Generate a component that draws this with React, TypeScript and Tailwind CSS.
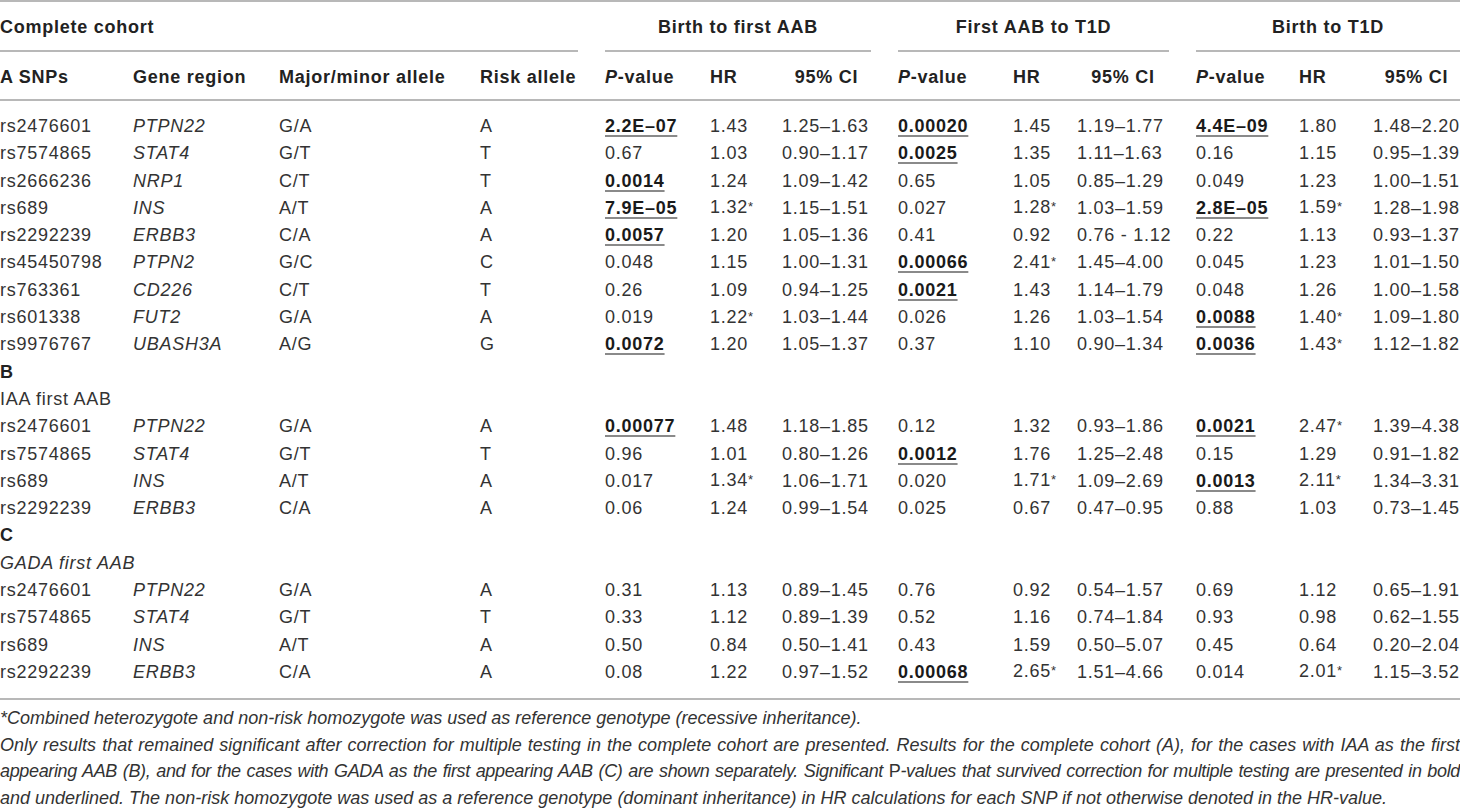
import React from "react";

type Cell = string;
type Row = {
  snp: string;
  gene: string;
  allele: string;
  risk: string;
  vals: Cell[];
};

const A: Row[] = [
  { snp: "rs2476601", gene: "PTPN22", allele: "G/A", risk: "A", vals: ["!2.2E–07", "1.43", "1.25–1.63", "!0.00020", "1.45", "1.19–1.77", "!4.4E–09", "1.80", "1.48–2.20"] },
  { snp: "rs7574865", gene: "STAT4", allele: "G/T", risk: "T", vals: ["0.67", "1.03", "0.90–1.17", "!0.0025", "1.35", "1.11–1.63", "0.16", "1.15", "0.95–1.39"] },
  { snp: "rs2666236", gene: "NRP1", allele: "C/T", risk: "T", vals: ["!0.0014", "1.24", "1.09–1.42", "0.65", "1.05", "0.85–1.29", "0.049", "1.23", "1.00–1.51"] },
  { snp: "rs689", gene: "INS", allele: "A/T", risk: "A", vals: ["!7.9E–05", "1.32*", "1.15–1.51", "0.027", "1.28*", "1.03–1.59", "!2.8E–05", "1.59*", "1.28–1.98"] },
  { snp: "rs2292239", gene: "ERBB3", allele: "C/A", risk: "A", vals: ["!0.0057", "1.20", "1.05–1.36", "0.41", "0.92", "0.76 - 1.12", "0.22", "1.13", "0.93–1.37"] },
  { snp: "rs45450798", gene: "PTPN2", allele: "G/C", risk: "C", vals: ["0.048", "1.15", "1.00–1.31", "!0.00066", "2.41*", "1.45–4.00", "0.045", "1.23", "1.01–1.50"] },
  { snp: "rs763361", gene: "CD226", allele: "C/T", risk: "T", vals: ["0.26", "1.09", "0.94–1.25", "!0.0021", "1.43", "1.14–1.79", "0.048", "1.26", "1.00–1.58"] },
  { snp: "rs601338", gene: "FUT2", allele: "G/A", risk: "A", vals: ["0.019", "1.22*", "1.03–1.44", "0.026", "1.26", "1.03–1.54", "!0.0088", "1.40*", "1.09–1.80"] },
  { snp: "rs9976767", gene: "UBASH3A", allele: "A/G", risk: "G", vals: ["!0.0072", "1.20", "1.05–1.37", "0.37", "1.10", "0.90–1.34", "!0.0036", "1.43*", "1.12–1.82"] },
];

const B: Row[] = [
  { snp: "rs2476601", gene: "PTPN22", allele: "G/A", risk: "A", vals: ["!0.00077", "1.48", "1.18–1.85", "0.12", "1.32", "0.93–1.86", "!0.0021", "2.47*", "1.39–4.38"] },
  { snp: "rs7574865", gene: "STAT4", allele: "G/T", risk: "T", vals: ["0.96", "1.01", "0.80–1.26", "!0.0012", "1.76", "1.25–2.48", "0.15", "1.29", "0.91–1.82"] },
  { snp: "rs689", gene: "INS", allele: "A/T", risk: "A", vals: ["0.017", "1.34*", "1.06–1.71", "0.020", "1.71*", "1.09–2.69", "!0.0013", "2.11*", "1.34–3.31"] },
  { snp: "rs2292239", gene: "ERBB3", allele: "C/A", risk: "A", vals: ["0.06", "1.24", "0.99–1.54", "0.025", "0.67", "0.47–0.95", "0.88", "1.03", "0.73–1.45"] },
];

const C: Row[] = [
  { snp: "rs2476601", gene: "PTPN22", allele: "G/A", risk: "A", vals: ["0.31", "1.13", "0.89–1.45", "0.76", "0.92", "0.54–1.57", "0.69", "1.12", "0.65–1.91"] },
  { snp: "rs7574865", gene: "STAT4", allele: "G/T", risk: "T", vals: ["0.33", "1.12", "0.89–1.39", "0.52", "1.16", "0.74–1.84", "0.93", "0.98", "0.62–1.55"] },
  { snp: "rs689", gene: "INS", allele: "A/T", risk: "A", vals: ["0.50", "0.84", "0.50–1.41", "0.43", "1.59", "0.50–5.07", "0.45", "0.64", "0.20–2.04"] },
  { snp: "rs2292239", gene: "ERBB3", allele: "C/A", risk: "A", vals: ["0.08", "1.22", "0.97–1.52", "!0.00068", "2.65*", "1.51–4.66", "0.014", "2.01*", "1.15–3.52"] },
];

const GRID =
  "grid grid-cols-[106px_119px_174px_98px_78px_45px_89px_88px_37px_92px_76px_47px_87px] gap-x-[27px]";

function Val({ v }: { v: string }) {
  if (v.startsWith("!")) {
    return (
      <span className="font-bold text-[#1a1a1a] underline decoration-2 underline-offset-[3px] decoration-[#8a8a8a]">
        {v.slice(1)}
      </span>
    );
  }
  if (v.endsWith("*")) {
    return (
      <span>
        {v.slice(0, -1)}
        <span className="text-[13px] relative top-[-2px]">*</span>
      </span>
    );
  }
  return <span>{v}</span>;
}

function DataRow({ r }: { r: Row }) {
  return (
    <>
      <div className="whitespace-nowrap">{r.snp}</div>
      <div className="whitespace-nowrap italic">{r.gene}</div>
      <div className="whitespace-nowrap">{r.allele}</div>
      <div className="whitespace-nowrap">{r.risk}</div>
      {r.vals.map((v, i) => (
        <div key={i} className="whitespace-nowrap">
          <Val v={v} />
        </div>
      ))}
    </>
  );
}

function Pval() {
  return (
    <span>
      <span className="italic">P</span>-value
    </span>
  );
}

export default function App() {
  return (
    <div className="w-[1460px] h-[808px] overflow-hidden bg-white font-['Liberation_Sans',Arial,sans-serif] text-[#333]">
      <div className="border-t-2 border-[#b8b8b8]" />
      {/* group header row */}
      <div className={`${GRID} h-[50px] text-[18px] tracking-[0.75px] font-bold text-[#222]`}>
        <div className="col-span-4 border-b-2 border-[#b8b8b8] flex items-center pt-[2px]">Complete cohort</div>
        <div className="col-span-3 border-b-2 border-[#b8b8b8] flex items-center justify-center pt-[2px]">Birth to first AAB</div>
        <div className="col-span-3 border-b-2 border-[#b8b8b8] flex items-center justify-center pt-[2px]">First AAB to T1D</div>
        <div className="col-span-3 border-b-2 border-[#b8b8b8] flex items-center justify-center pt-[2px]">Birth to T1D</div>
      </div>
      {/* column header row */}
      <div className={`${GRID} h-[49px] border-b-2 border-[#b8b8b8] items-center pt-[3px] text-[18px] tracking-[0.75px] font-bold text-[#222] whitespace-nowrap`}>
        <div>A SNPs</div>
        <div>Gene region</div>
        <div>Major/minor allele</div>
        <div>Risk allele</div>
        <div><Pval /></div>
        <div>HR</div>
        <div className="text-center">95% CI</div>
        <div><Pval /></div>
        <div>HR</div>
        <div className="text-center">95% CI</div>
        <div><Pval /></div>
        <div>HR</div>
        <div className="text-center">95% CI</div>
      </div>
      {/* body */}
      <div className={`${GRID} auto-rows-[27.3px] items-center leading-[27.3px] pt-[12px] pb-[12px] border-b-2 border-[#b8b8b8] text-[18px] tracking-[0.75px]`}>
        {A.map((r, i) => (
          <DataRow key={"a" + i} r={r} />
        ))}
        <div className="col-span-13 font-bold text-[#222]">B</div>
        <div className="col-span-13">IAA first AAB</div>
        {B.map((r, i) => (
          <DataRow key={"b" + i} r={r} />
        ))}
        <div className="col-span-13 font-bold text-[#222]">C</div>
        <div className="col-span-13 italic">GADA first AAB</div>
        {C.map((r, i) => (
          <DataRow key={"c" + i} r={r} />
        ))}
      </div>
      {/* footnotes */}
      <div className="pt-[5px] text-[18px] leading-[26.5px] italic text-[#333]">
        <div className="whitespace-nowrap">
          *Combined heterozygote and non-risk homozygote was used as reference genotype (recessive inheritance).
        </div>
        <div className="text-justify [text-align-last:justify] whitespace-nowrap">
          Only results that remained significant after correction for multiple testing in the complete cohort are presented. Results for the complete cohort (A), for the cases with IAA as the first
        </div>
        <div className="text-justify [text-align-last:justify] whitespace-nowrap tracking-[-0.35px] [word-spacing:-1px]">
          appearing AAB (B), and for the cases with GADA as the first appearing AAB (C) are shown separately. Significant <span className="not-italic">P</span>-values that survived correction for multiple testing are presented in bold
        </div>
        <div className="whitespace-nowrap">
          and underlined. The non-risk homozygote was used as a reference genotype (dominant inheritance) in HR calculations for each SNP if not otherwise denoted in the HR-value.
        </div>
      </div>
    </div>
  );
}
